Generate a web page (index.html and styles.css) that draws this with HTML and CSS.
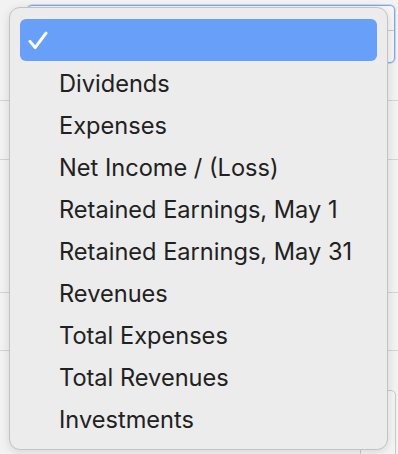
FILE: index.html
```html
<!DOCTYPE html>
<html>
<head>
<meta charset="utf-8">
<link rel="stylesheet" href="styles.css">
</head>
<body>
<div class="page">
  <div class="field"><span class="field-tick"></span></div>
  <div class="rows">
    <div class="row r1"></div>
    <div class="row r2"></div>
    <div class="row r3"></div>
    <div class="row r4"></div>
  </div>
  <div class="lower-box"></div>
</div>
<ul class="menu">
  <li class="item selected"><svg class="check" viewBox="0 0 20 19" width="20" height="19"><path d="M2 10.4 L7.2 16.6 L18 2.2" fill="none" stroke="#fff" stroke-width="3" stroke-linecap="round" stroke-linejoin="round"/></svg><span class="label"></span></li>
  <li class="item"><span class="label">Dividends</span></li>
  <li class="item"><span class="label">Expenses</span></li>
  <li class="item"><span class="label">Net Income / (Loss)</span></li>
  <li class="item"><span class="label">Retained Earnings, May 1</span></li>
  <li class="item"><span class="label">Retained Earnings, May 31</span></li>
  <li class="item"><span class="label">Revenues</span></li>
  <li class="item"><span class="label">Total Expenses</span></li>
  <li class="item"><span class="label">Total Revenues</span></li>
  <li class="item"><span class="label">Investments</span></li>
</ul>
</body>
</html>
```
FILE: styles.css
```css
html, body {
  margin: 0;
  padding: 0;
  background: #f2f2f2;
  width: 398px;
  height: 454px;
  overflow: hidden;
}
.page {
  position: relative;
  width: 398px;
  height: 454px;
}
.field {
  margin: 5px 3px 0 27px;
  height: 56px;
  border: 1px solid #7fa9e4;
  border-radius: 5px;
  background: #f6f6f6;
  box-shadow: 0 0 0 1px rgba(122,167,228,0.35);
  position: relative;
}
.field-tick {
  position: absolute;
  right: 0;
  top: 24px;
  width: 6px;
  border-top: 1px solid #c8c8c8;
}
.rows {
  margin-top: 37px;
}
.row {
  border-bottom: 1px solid #d2d2d2;
}
.r1 { height: 0; }
.r2 { height: 58px; }
.r3 { height: 132px; }
.r4 { height: 57px; }
.lower-box {
  margin: 39px 2px 0 360px;
  height: 80px;
  border: 1px solid #c9c9c9;
  border-radius: 5px;
  background: #f4f4f4;
}
.menu {
  position: absolute;
  left: 9px;
  top: 7px;
  width: 379px;
  margin: 0;
  padding: 11px 10px 10px 10px;
  list-style: none;
  background: #ececec;
  border: 1px solid #c3c3c3;
  border-radius: 11px;
  box-shadow: 0 2px 10px rgba(0,0,0,0.12);
  box-sizing: border-box;
  font-family: "Inter", "Liberation Sans", sans-serif;
  font-size: 23.6px;
  color: #212121;
}
.item {
  height: 42px;
  display: flex;
  align-items: center;
  border-radius: 6px;
  position: relative;
}
.label {
  padding-left: 39px;
  padding-top: 2px;
}
.selected {
  background: #689ff8;
}
.check {
  position: absolute;
  left: 8px;
  top: 12px;
  width: 20px;
  height: 19px;
}
```
